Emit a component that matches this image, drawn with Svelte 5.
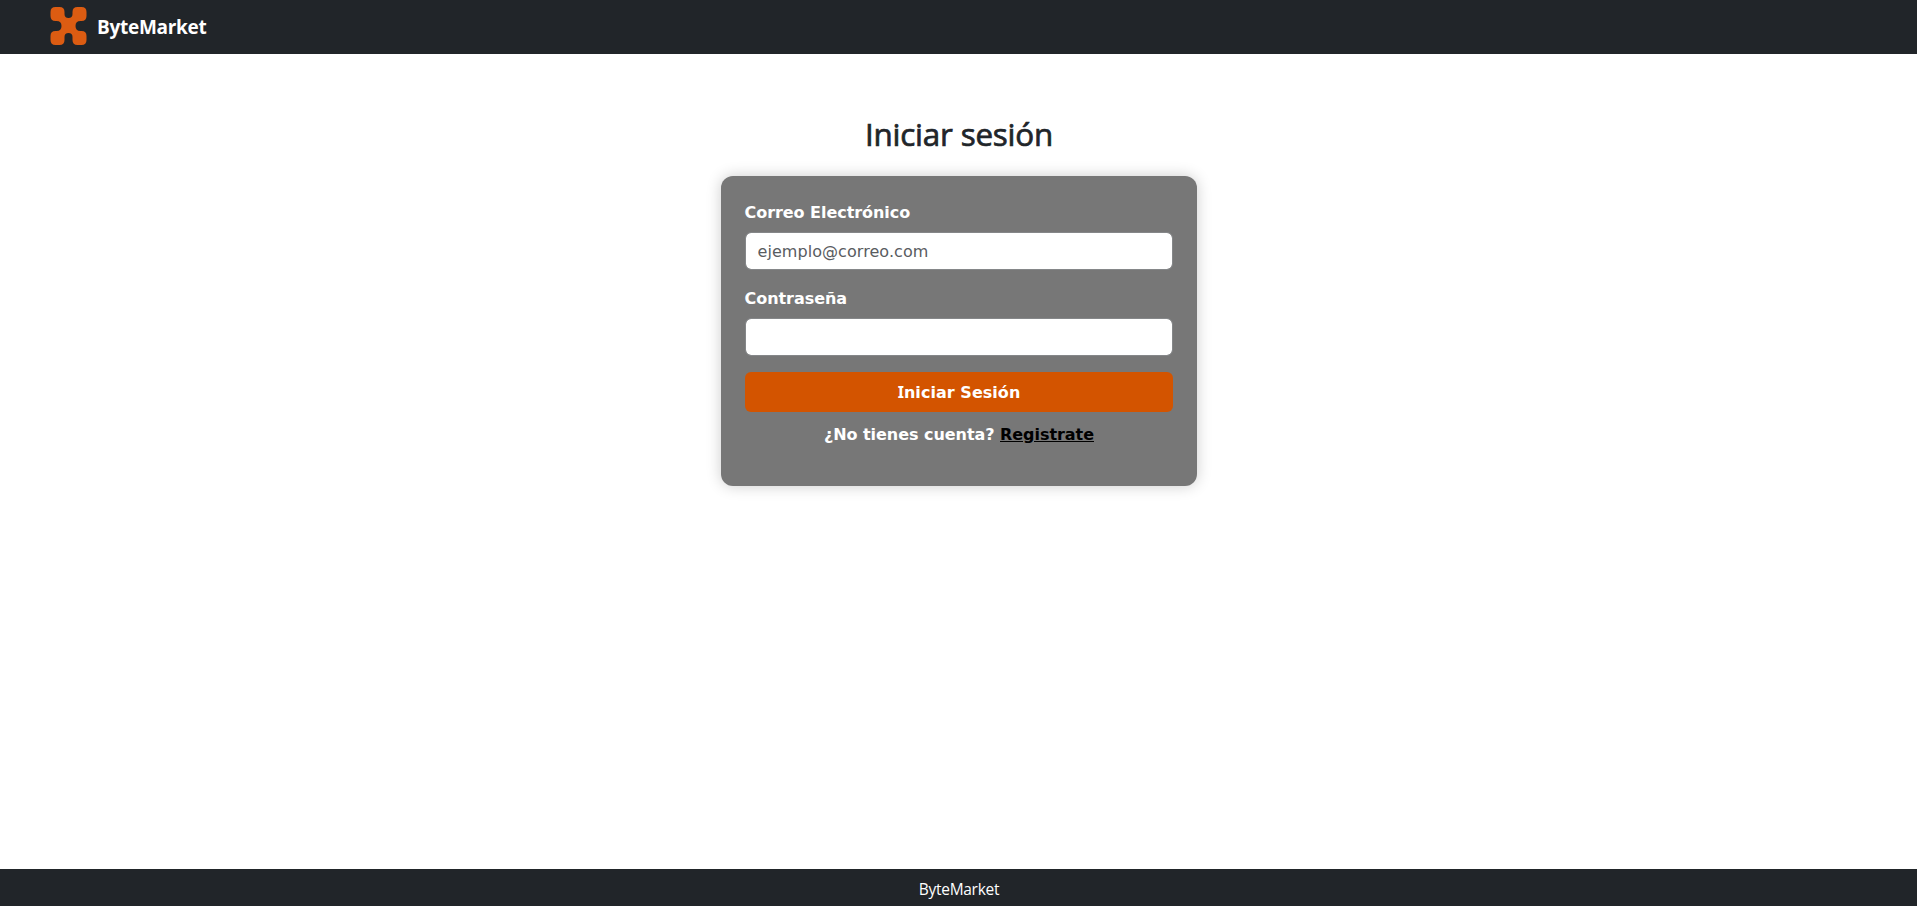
<script>
  let email = $state('');
  let password = $state('');
</script>

<div class="page">
  <header>
    <svg class="logo" viewBox="0 0 36 38" aria-hidden="true">
      <path fill="#dc5c12" d="M5 0H9Q14 0 14 5V7Q14 11 18 11T22 7V5Q22 0 27 0H31Q36 0 36 5V9Q36 14 31 14H30Q25 14 25 19T30 24H31Q36 24 36 29V33Q36 38 31 38H27Q22 38 22 33V30Q22 26 18 26T14 30V33Q14 38 9 38H5Q0 38 0 33V29Q0 24 5 24H6Q11 24 11 19T6 14H5Q0 14 0 9V5Q0 0 5 0Z" />
    </svg>
    <span class="brand">ByteMarket</span>
  </header>

  <main>
    <h1>Iniciar sesión</h1>
    <form onsubmit={(e) => e.preventDefault()}>
      <label for="email">Correo Electrónico</label>
      <input id="email" type="email" placeholder="ejemplo@correo.com" bind:value={email} />
      <label for="password">Contraseña</label>
      <input id="password" type="password" bind:value={password} />
      <button type="submit"><span class="initial">I</span>niciar Sesión</button>
      <p>¿No tienes cuenta? <a href="#registro">Registrate</a></p>
    </form>
  </main>

  <footer><span>ByteMarket</span></footer>
</div>

<style>
  :global(body) { margin: 0; background: #fff; }
  .page {
    height: 906px;
    display: flex;
    flex-direction: column;
    font-family: "Open Sans", "Noto Sans", sans-serif;
    color: #212529;
  }
  header {
    height: 54px;
    box-sizing: border-box;
    padding: 0 50px 2px;
    display: flex;
    align-items: center;
    gap: 10px;
    background: #212529;
  }
  .logo { width: 37px; height: 38px; }
  .brand { color: #fff; font-size: 19px; font-weight: 700; letter-spacing: -0.28px; line-height: 30px; padding-top: 2px; }
  main { flex: 1; display: flex; flex-direction: column; align-items: center; padding-top: 61px; }
  h1 {
    margin: 0 0 23px;
    padding-left: 1px;
    font-size: 31.4px;
    font-weight: 400;
    line-height: 38px;
    letter-spacing: -0.2px;
    -webkit-text-stroke: 0.7px #212529;
  }
  form {
    width: 476px;
    height: 310px;
    box-sizing: border-box;
    padding: 24px;
    display: flex;
    flex-direction: column;
    background: #777;
    border-radius: 12px;
    box-shadow: 0 0 15px rgba(0, 0, 0, 0.2);
    color: #fff;
    font-family: "DejaVu Sans", Verdana, sans-serif;
    font-size: 16px;
    font-weight: 700;
    line-height: 24px;
    letter-spacing: -0.05px;
  }
  label { margin: 1px 0 7px; }
  input {
    box-sizing: border-box;
    width: 100%;
    height: 38px;
    margin: 0 0 16px;
    padding: 0 12px;
    border: 1px solid #858789;
    border-radius: 6px;
    background: #fff;
    background-clip: padding-box;
    color: #212529;
    font: 400 16px/24px "DejaVu Sans", Verdana, sans-serif;
    letter-spacing: 0.06px;
  }
  input::placeholder { color: #595c5f; opacity: 1; }
  button {
    height: 40px;
    padding: 2px 0 0 1px;
    border: 0;
    border-radius: 6px;
    background: #d35400;
    color: #fff;
    font: 700 16px/24px "DejaVu Sans", Verdana, sans-serif;
    letter-spacing: 0.04px;
  }
  .initial { font-family: "Noto Sans", sans-serif; line-height: 1; }
  p { margin: 11px 0 0; padding-left: 1px; text-align: center; }
  a { color: #000; }
  footer {
    height: 37px;
    box-sizing: border-box;
    padding: 3px 0 0 1px;
    display: flex;
    align-items: center;
    justify-content: center;
    background: #212529;
    color: #fff;
    font-size: 15.5px;
    letter-spacing: -0.3px;
  }
</style>
